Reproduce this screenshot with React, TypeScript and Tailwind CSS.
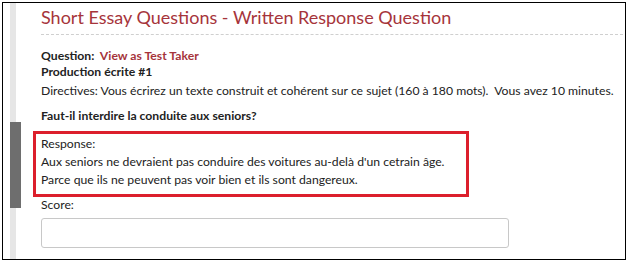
import React from 'react';

const App: React.FC = () => {
  return (
    <div className="w-[633px] h-[263px] bg-[#d8d8d8] overflow-hidden" style={{ fontFamily: 'Lato, "Open Sans", sans-serif' }}>
      <div className="flex h-[263px] pt-[2px] pl-[2px] pr-[7px] pb-[3px] bg-white">
        <div className="flex flex-1 border border-black bg-white">
          {/* left rail */}
          <div className="w-[30px] flex pl-[7px]">
            <div className="w-[6px] bg-[#e6e6e6] flex flex-col">
              <div className="h-[119px]" />
              <div className="h-[86px] w-[11px] bg-[#6e6e6e]" />
            </div>
          </div>
          <div className="flex-1 pl-[8px] pr-[2px] text-[12.2px] text-[#222]">
            <div className="text-[18px] text-[#a6343b] leading-[22px] pt-[3px] pb-[6px] border-b border-dashed border-[#cfcfcf]">
              Short Essay Questions - Written Response Question
            </div>
            <div className="pt-[13px] leading-[16px]">
              <div className="font-bold">
                Question:&nbsp; <span className="text-[#a6343b]">View as Test Taker</span>
              </div>
              <div className="font-bold">Production écrite #1</div>
              <div className="mt-[3px]">Directives: Vous écrirez un texte construit et cohérent sur ce sujet (160 à 180 mots).&nbsp; Vous avez 10 minutes.</div>
              <div className="font-bold mt-[9px]">Faut-il interdire la conduite aux seniors?</div>
            </div>
            <div className="ml-[-8px] w-[436px] mt-[7px] border-[3px] border-[#dc1f2c] pl-[5px] pt-[1px] pb-[5px] leading-[18px]">
              <div>Response:</div>
              <div>Aux seniors ne devraient pas conduire des voitures au-delà d'un cetrain âge.</div>
              <div>Parce que ils ne peuvent pas voir bien et ils sont dangereux.</div>
            </div>
            <div className="leading-[16px]">Score:</div>
            <div className="mt-[5px] w-[468px] h-[30px] border border-[#c8c8c8] rounded-[3px]" />
          </div>
        </div>
      </div>
    </div>
  );
};

export default App;
